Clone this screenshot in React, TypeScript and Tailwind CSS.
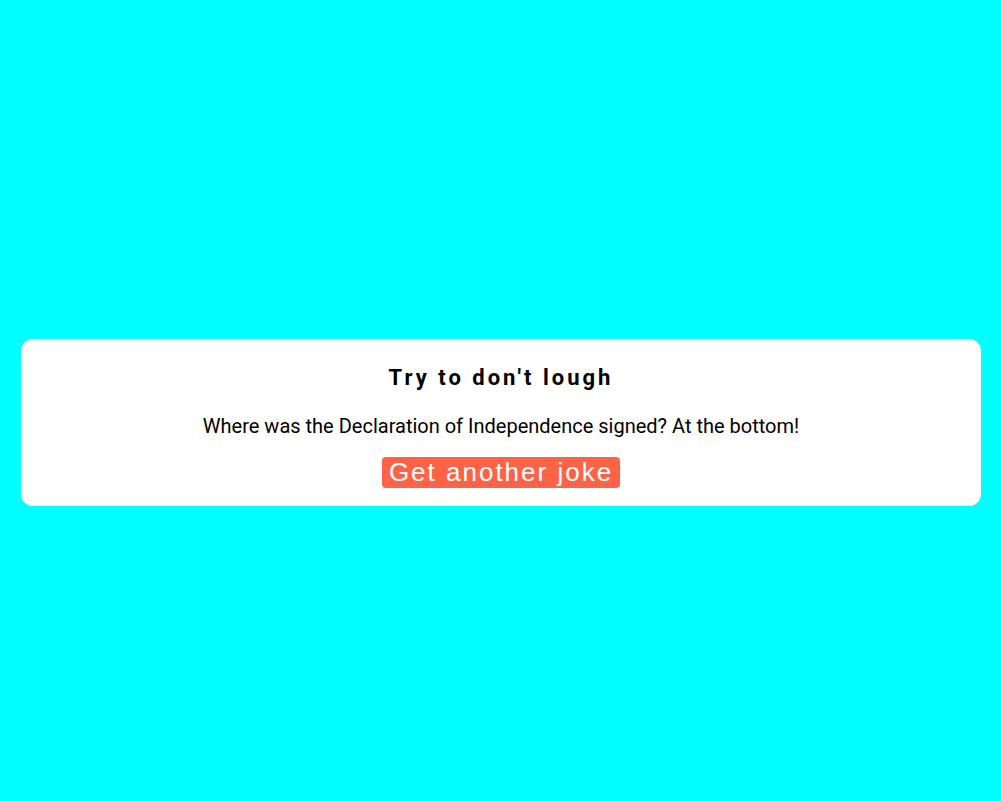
export default function App() {
  return (
    <div className="min-h-screen flex flex-col justify-center items-center bg-[#00ffff] pt-[43px] pl-[21px] pr-[20px]" style={{ fontFamily: 'Roboto, sans-serif' }}>
      <div className="w-full bg-white rounded-[12px] flex flex-col items-center pt-[25px] pb-[18px]">
        <h1 className="text-[22px] font-bold tracking-[3px] text-black leading-[28px]">Try to don't lough</h1>
        <p className="text-[20px] text-black mt-[21px] leading-[26px]">
          Where was the Declaration of Independence signed? At the bottom!
        </p>
        <button className="mt-[18px] bg-[#ff6347] text-white rounded-[4px] px-[7px] h-[31px] text-[26px] tracking-[2px] leading-none" style={{ fontFamily: '"Liberation Sans", Arial, sans-serif' }}>
          Get another joke
        </button>
      </div>
    </div>
  );
}
